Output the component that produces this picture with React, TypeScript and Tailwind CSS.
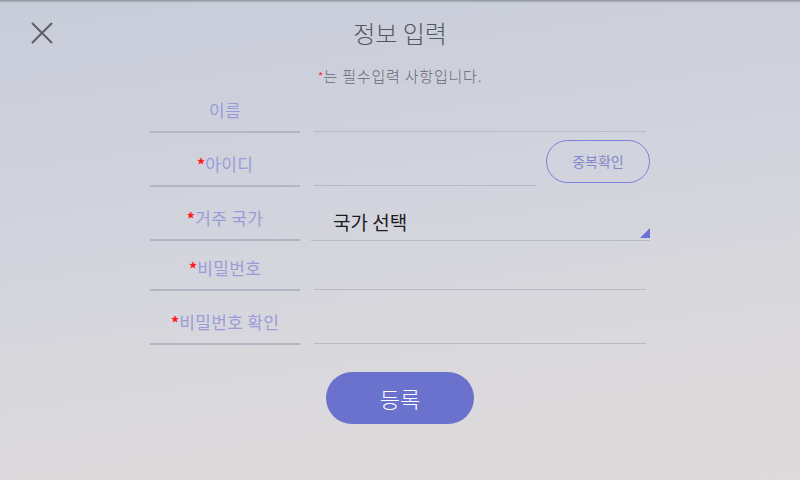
import React, { useState } from "react";

const Req = () => (
  <span className="text-[#ff1a1a] text-[16px] font-bold leading-none align-[7px]">*</span>
);

type RowProps = {
  label: string;
  required?: boolean;
  className?: string;
  children: React.ReactNode;
};

const Row: React.FC<RowProps> = ({ label, required, className, children }) => (
  <div className={`flex items-end h-[44px] ${className ?? ""}`}>
    <div className="w-[150px] h-full flex items-center justify-center border-b-2 border-[#b4b5c4] text-[17px] tracking-[0.3px] text-[#9a9cd8]">
      {required && <Req />}
      <span>{label}</span>
    </div>
    {children}
  </div>
);

const App: React.FC = () => {
  const [name, setName] = useState("");
  const [userId, setUserId] = useState("");
  const [pw, setPw] = useState("");
  const [pw2, setPw2] = useState("");

  const inputCls =
    "mb-[1px] ml-[14px] w-[332px] h-[34px] border-b border-[#b9bac7] bg-transparent outline-none text-[17px] text-[#333] px-2";

  return (
    <div className="w-[800px] h-[480px] flex flex-col bg-[linear-gradient(172deg,#c8cdda_0%,#d1d3dd_40%,#dbd9dc_75%,#dddada_100%)] font-['Noto_Sans_CJK_KR',sans-serif] overflow-hidden">
      <div className="h-[3px] bg-gradient-to-b from-[#8e929b] to-transparent" />

      <div className="h-[60px] grid grid-cols-[1fr_auto_1fr] items-center px-[31px]">
        <button className="w-[22px] h-[22px] text-[#5d5f67]">
          <svg viewBox="0 0 22 22" width="22" height="22" fill="none" stroke="currentColor" strokeWidth="2">
            <path d="M1 1L21 21M21 1L1 21" />
          </svg>
        </button>
        <h1 className="text-[24px] font-light text-[#55575f] leading-none">정보 입력</h1>
        <div />
      </div>

      <p className="mt-[3px] h-[20px] leading-[20px] text-center text-[15px] font-light tracking-[0.8px] text-[#656873]">
        <span className="text-[#ff1a1a] text-[13px] tracking-normal">*</span>는 필수입력 사항입니다.
      </p>

      <form className="mt-[3px] ml-[150px] flex flex-col">
        <Row label="이름">
          <input className={inputCls} value={name} onChange={(e) => setName(e.target.value)} />
        </Row>

        <Row label="아이디" required className="mt-[10px]">
          <input
            className="mb-[1px] ml-[14px] w-[222px] h-[34px] border-b border-[#b9bac7] bg-transparent outline-none text-[17px] text-[#333] px-2"
            value={userId}
            onChange={(e) => setUserId(e.target.value)}
          />
          <button
            type="button"
            className="ml-[10px] mb-[4px] w-[104px] h-[43px] shrink-0 rounded-full border border-[#7b80da] text-[14px] text-[#8587cc]"
          >
            중복확인
          </button>
        </Row>

        <Row label="거주 국가" required className="mt-[10px]">
          <div className="ml-[11px] w-[339px] h-[40px] flex items-end justify-between border-b border-[#b9bac7]">
            <span className="ml-[22px] mb-[9px] text-[19px] leading-none text-[#1b1b1f]">국가 선택</span>
            <svg width="10" height="10" viewBox="0 0 10 10" className="mb-[2px]">
              <path d="M10 0L10 10L0 10Z" fill="#6a70d6" />
            </svg>
          </div>
        </Row>

        <Row label="비밀번호" required className="mt-[6px]">
          <input type="password" className={inputCls} value={pw} onChange={(e) => setPw(e.target.value)} />
        </Row>

        <Row label="비밀번호 확인" required className="mt-[10px]">
          <input type="password" className={inputCls} value={pw2} onChange={(e) => setPw2(e.target.value)} />
        </Row>

        <button
          type="button"
          className="mt-[27px] ml-[176px] w-[148px] h-[52px] rounded-full bg-[#6b72cd] text-white text-[22px] font-light"
        >
          등록
        </button>
      </form>
    </div>
  );
};

export default App;
